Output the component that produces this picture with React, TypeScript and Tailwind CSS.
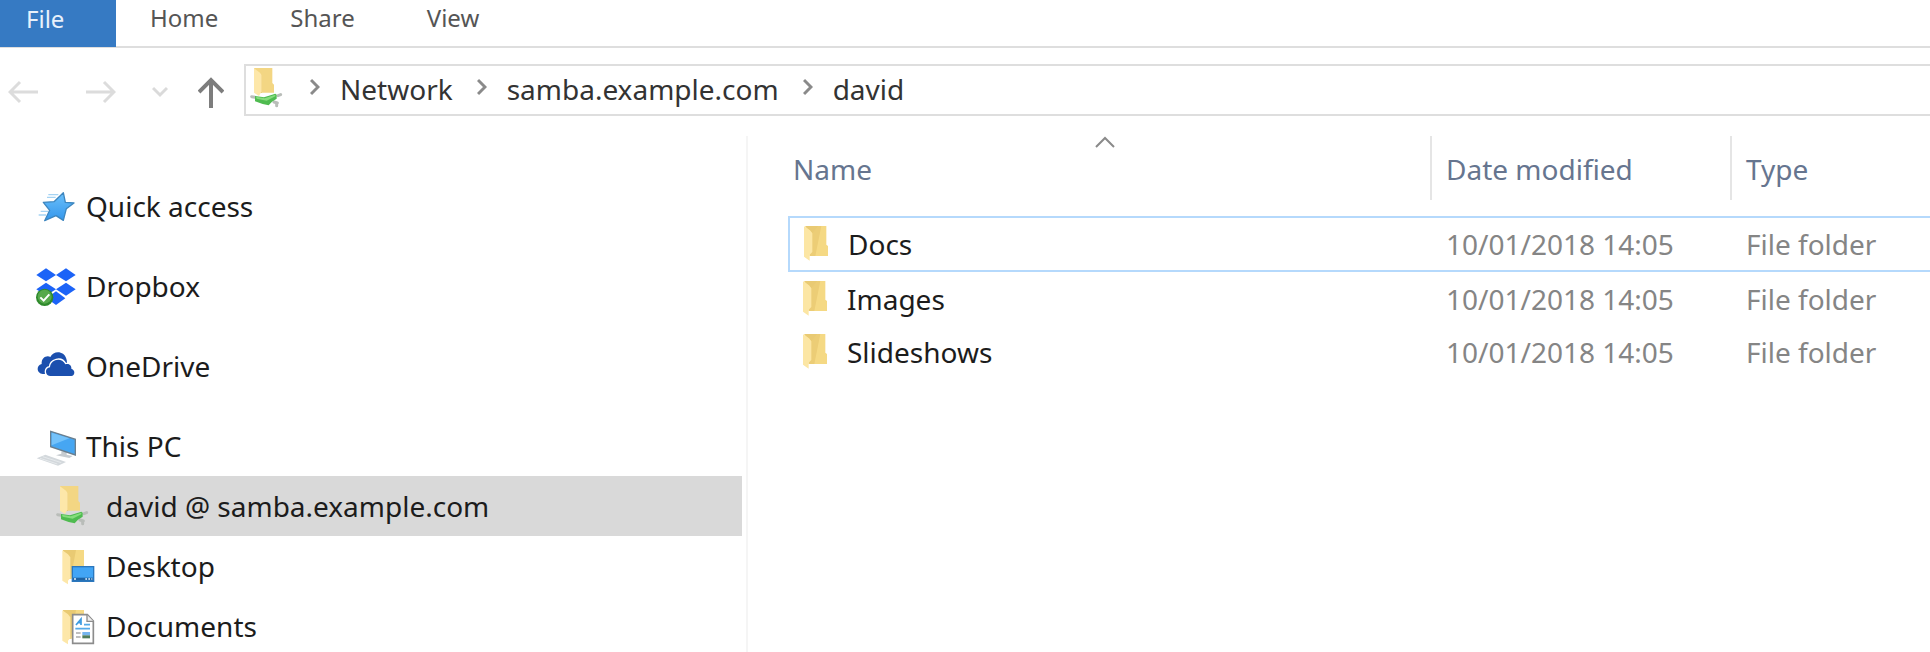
import React from "react";

const NetworkFolderIcon = () => (
  <svg viewBox="0 0 120 120" className="size-10 shrink-0" aria-hidden="true">
    <polygon points="12,0 67,0 67,45 72,50 72,74 28,74" fill="#f3d683" />
    <polygon points="36,22 36,74 28,74 28,14" fill="#e8c86f" />
    <polygon points="12,1 30,14 35,21 35,70 27,84 12,74" fill="#fde7a9" />
    <path d="M5 86l10 2M84 83l8-3M72 102l10 3M80 106v7" stroke="#b9bdb9" strokeWidth="9" strokeLinecap="round" />
    <polygon points="15,84 42,88 76,77 80,80 80,92 66,101 56,112 38,108 15,100" fill="#4fbb50" />
    <polygon points="18,86 44,91 76,80 76,85 50,98 20,92" fill="#86dd7c" />
  </svg>
);

const FolderIcon = () => (
  <svg viewBox="0 0 72 108" className="h-9 w-6 shrink-0" aria-hidden="true">
    <polygon points="4,0 67,0 67,56 72,60 72,90 17,90" fill="#f5d984" />
    <polygon points="24,20 44,0 52,0 34,90 17,90" fill="#eccd76" />
    <polygon points="4,0 44,0 25,22" fill="#e9ca73" />
    <polygon points="0,1 18,13 25,22 25,78 17,86 17,104 0,92" fill="#fce6a4" />
  </svg>
);

const FolderBase = () => (
  <>
    <polygon points="21,12 84,12 84,98 38,98" fill="#f5d984" />
    <polygon points="21,12 60,12 44,98 36,98" fill="#e9ca73" />
    <polygon points="19,13 36,25 43,34 43,96 36,104 36,115 19,104" fill="#fde7a9" />
  </>
);

const DesktopIcon = () => (
  <svg viewBox="0 0 120 120" className="size-10 shrink-0" aria-hidden="true">
    <FolderBase />
    <rect x="49" y="62" width="64" height="44" fill="#42a5f5" stroke="#2b77bd" strokeWidth="4" />
    <rect x="51" y="95" width="60" height="9" fill="#1f63a3" />
    <path d="M54 99h6M88 99h5M97 99h5M106 99h3" stroke="#e5f3ff" strokeWidth="5" />
  </svg>
);

const DocumentsIcon = () => (
  <svg viewBox="0 0 120 120" className="size-10 shrink-0" aria-hidden="true">
    <FolderBase />
    <path d="M50 26h44l18 19v67H50z" fill="#fff" stroke="#8c8c8c" strokeWidth="5" />
    <path d="M93 26v20h19" fill="#eee" stroke="#8c8c8c" strokeWidth="4" />
    <path d="M60 57l15-18v18M64 50h11" fill="none" stroke="#3d9be0" strokeWidth="5" />
    <path d="M84 56h18M58 68h44" stroke="#54aae8" strokeWidth="5" />
    <path d="M60 81h14M60 93h14" stroke="#aaa" strokeWidth="4" />
    <rect x="79" y="78" width="23" height="10" fill="#75b5ef" />
    <rect x="79" y="88" width="23" height="9" fill="#4f7d5c" />
  </svg>
);

const StarIcon = () => (
  <svg viewBox="0 0 120 120" className="size-10 shrink-0" aria-hidden="true">
    <defs>
      <linearGradient id="star" x1="0" y1="0" x2="0" y2="1">
        <stop offset="0" stopColor="#6cc0fa" />
        <stop offset="1" stopColor="#3396ec" />
      </linearGradient>
    </defs>
    <path d="M37 26h30M33 34h26M14 76h22M8 87h22" stroke="#a5d3f3" strokeWidth="4" />
    <polygon points="82,20 88,49 114,51 91,68 82,103 60,89 26,104 41,73 22,49 54,47" fill="url(#star)" stroke="#3d86bf" strokeWidth="4" strokeLinejoin="round" />
  </svg>
);

const DropboxIcon = () => (
  <svg viewBox="0 0 120 120" className="size-10 shrink-0" aria-hidden="true">
    <g fill="#1c63f7">
      <polygon points="30,7 60,27 30,46 1,27" />
      <polygon points="90,7 119,27 90,46 60,27" />
      <polygon points="30,50 60,70 30,89 1,70" />
      <polygon points="90,50 119,70 90,89 60,70" />
      <polygon points="60,76 88,97 60,117 32,97" />
    </g>
    <circle cx="26" cy="94" r="26" fill="#2f8a2c" />
    <circle cx="26" cy="92" r="21" fill="#56a94c" />
    <path d="M13 94l10 10 17-19" fill="none" stroke="#fff" strokeWidth="6" />
  </svg>
);

const OneDriveIcon = () => (
  <svg viewBox="0 0 120 120" className="size-10 shrink-0" aria-hidden="true">
    <path d="M20 84C1 82 0 58 17 54C16 35 32 27 43 33C52 13 84 13 91 38C96 50 90 84 80 84Z" fill="#1b4fae" />
    <path d="M42 90C26 88 26 66 42 64C43 41 76 31 88 55C101 51 107 60 106 68C119 72 117 89 106 90Z" fill="#1b4fae" stroke="#fff" strokeWidth="8" paintOrder="stroke" />
  </svg>
);

const ComputerIcon = () => (
  <svg viewBox="0 0 120 120" className="size-10 shrink-0" aria-hidden="true">
    <polygon points="76,76 92,78 92,86 110,90 100,96 60,88 76,83" fill="#c7ccd0" />
    <polygon points="2,97 28,86 90,108 66,119" fill="#d3d8dc" />
    <path d="M12 97l52 17M20 92l56 18" stroke="#eef1f3" strokeWidth="2" />
    <polygon points="44,16 118,40 118,87 44,62" fill="#46a6f2" stroke="#6a7f8f" strokeWidth="4" />
    <polygon points="47,20 100,37 47,58" fill="#74c2fa" />
  </svg>
);

const CrumbChevron = () => (
  <svg viewBox="0 0 10 20" className="mb-1 h-5 w-[10px]" fill="none" stroke="#8a8a8a" strokeWidth="3" aria-hidden="true">
    <path d="M1 3l7 7-7 7" />
  </svg>
);

const tabs = ["Home", "Share", "View"];
const crumbs = ["Network", "samba.example.com", "david"];

const places = [
  { label: "Quick access", icon: <StarIcon /> },
  { label: "Dropbox", icon: <DropboxIcon /> },
  { label: "OneDrive", icon: <OneDriveIcon /> },
  { label: "This PC", icon: <ComputerIcon /> },
];

const children = [
  { label: "david @ samba.example.com", icon: <NetworkFolderIcon />, selected: true },
  { label: "Desktop", icon: <DesktopIcon />, selected: false },
  { label: "Documents", icon: <DocumentsIcon />, selected: false },
];

const files = [
  { name: "Docs", modified: "10/01/2018 14:05", type: "File folder", focused: true },
  { name: "Images", modified: "10/01/2018 14:05", type: "File folder", focused: false },
  { name: "Slideshows", modified: "10/01/2018 14:05", type: "File folder", focused: false },
];

export default function App() {
  return (
    <div className="flex h-screen flex-col overflow-hidden bg-white font-['Noto_Sans','Open_Sans',sans-serif] text-[28px] leading-10 whitespace-nowrap text-[#1c1c1c]">
      <div className="flex h-12 shrink-0 border-b-2 border-[#dedede] text-2xl leading-8 text-[#555]">
        <button className="-mb-px w-[116px] bg-[#367ac3] pb-2.5 pl-[26px] text-left text-[#e8f1fb]">File</button>
        <div className="flex gap-[72px] pb-2.5 pl-[34px]">
          {tabs.map((tab) => (
            <button key={tab}>{tab}</button>
          ))}
        </div>
      </div>

      <div className="flex shrink-0 items-center pt-4 pl-2">
        <button aria-label="Back" className="mr-12">
          <svg viewBox="0 0 30 40" className="h-10 w-[30px]" fill="none" stroke="#dcdcdc" strokeWidth="3">
            <path d="M30 22H2M12 12L2 22l10 10" />
          </svg>
        </button>
        <button aria-label="Forward" className="mr-9">
          <svg viewBox="0 0 30 40" className="h-10 w-[30px]" fill="none" stroke="#dcdcdc" strokeWidth="3">
            <path d="M0 22h28M18 12l10 10-10 10" />
          </svg>
        </button>
        <button aria-label="Recent locations" className="mr-[30px]">
          <svg viewBox="0 0 16 40" className="h-10 w-4" fill="none" stroke="#dadada" strokeWidth="3">
            <path d="M1 18l7 7 7-7" />
          </svg>
        </button>
        <button aria-label="Up" className="mr-5">
          <svg viewBox="0 0 26 40" className="h-10 w-[26px]" fill="none" stroke="#7d7d7d" strokeWidth="4">
            <path d="M13 38V10M1 22l12-12 12 12" />
          </svg>
        </button>
        <nav aria-label="Address" className="flex h-[52px] flex-1 items-start border-2 border-r-0 border-[#dedede] pl-1">
          <div className="pt-0.5">
            <NetworkFolderIcon />
          </div>
          <ol className="flex items-center gap-6 pt-[3px] pl-5 text-[#333]">
            {crumbs.map((crumb) => (
              <li key={crumb} className="flex items-center gap-5">
                <CrumbChevron />
                <a href="#">{crumb}</a>
              </li>
            ))}
          </ol>
        </nav>
      </div>

      <div className="flex min-h-0 flex-1 pt-5">
        <nav aria-label="Folders" className="flex w-[742px] shrink-0 flex-col pt-10">
          <ul className="flex flex-col gap-5">
            {places.map((place) => (
              <li key={place.label}>
                <a href="#" className="flex h-[60px] items-center gap-[10px] pl-9">
                  {place.icon}
                  {place.label}
                </a>
              </li>
            ))}
          </ul>
          <ul>
            {children.map((child) => (
              <li key={child.label}>
                <a
                  href="#"
                  className={
                    child.selected
                      ? "flex h-[60px] items-center gap-[10px] bg-[#d9d9d9] pl-14"
                      : "flex h-[60px] items-center gap-[10px] pl-14"
                  }
                >
                  {child.icon}
                  {child.label}
                </a>
              </li>
            ))}
          </ul>
        </nav>

        <main className="ml-1 flex-1 border-l-2 border-[#f5f5f5] pl-10">
          <table className="w-full table-fixed border-collapse text-left">
            <colgroup>
              <col className="w-[641px]" />
              <col className="w-[300px]" />
              <col />
            </colgroup>
            <thead>
              <tr className="text-[#66758f]">
                <th className="p-0 pb-4 font-normal">
                  <div className="relative h-16 pt-[13px] pl-1">
                    Name
                    <svg viewBox="0 0 20 12" className="absolute top-0 left-[306px] h-3 w-5" fill="none" stroke="#8a8a8a" strokeWidth="2" aria-hidden="true">
                      <path d="M1 11l9-9 9 9" />
                    </svg>
                  </div>
                </th>
                <th className="p-0 pb-4 font-normal">
                  <div className="h-16 border-l-2 border-[#e5e5e5] pt-[13px] pl-[14px]">Date modified</div>
                </th>
                <th className="p-0 pb-4 font-normal">
                  <div className="h-16 border-l-2 border-[#e5e5e5] pt-[13px] pl-[14px]">Type</div>
                </th>
              </tr>
            </thead>
            <tbody>
              {files.map((file) => (
                <tr key={file.name} className="h-[54px] text-[#858585]">
                  <td className={file.focused ? "border-2 border-r-0 border-[#b5d9fc] p-0" : "p-0"}>
                    <a href="#" className="flex items-center gap-5 pl-[14px] text-[#1c1c1c]">
                      <FolderIcon />
                      {file.name}
                    </a>
                  </td>
                  <td className={file.focused ? "border-y-2 border-[#b5d9fc] p-0 pl-4" : "p-0 pl-4"}>{file.modified}</td>
                  <td className={file.focused ? "border-y-2 border-[#b5d9fc] p-0 pl-4" : "p-0 pl-4"}>{file.type}</td>
                </tr>
              ))}
            </tbody>
          </table>
        </main>
      </div>
    </div>
  );
}
